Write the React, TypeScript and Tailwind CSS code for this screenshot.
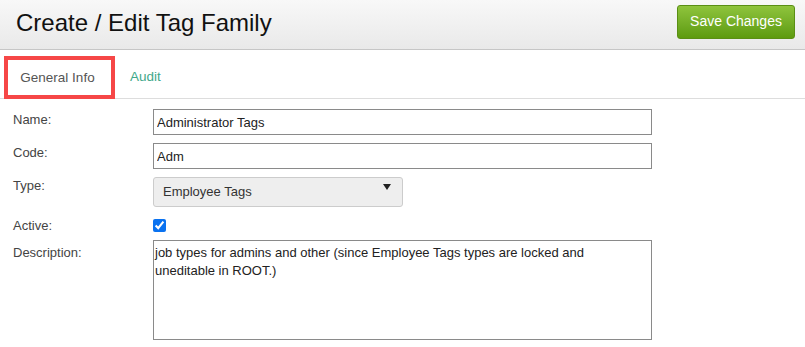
import { useState } from "react";

const font = { fontFamily: '"Liberation Sans", Arial, sans-serif' };

function Row({
  label,
  children,
  labelPad = "pt-0",
  align = "items-start",
}: {
  label: string;
  children: React.ReactNode;
  labelPad?: string;
  align?: string;
}) {
  return (
    <div className={`flex ${align}`}>
      <div className={`w-[140px] shrink-0 text-[13px] leading-[16px] text-[#444] ${labelPad}`}>{label}</div>
      <div className="flex-1 flex">{children}</div>
    </div>
  );
}

export default function App() {
  const [name, setName] = useState("Administrator Tags");
  const [code, setCode] = useState("Adm");
  const [active, setActive] = useState(true);
  const [desc, setDesc] = useState(
    "job types for admins and other (since Employee Tags types are locked and uneditable in ROOT.)"
  );

  return (
    <div className="w-[805px] h-[347px] bg-white overflow-hidden" style={font}>
      <div className="h-[50px] flex items-center justify-between pl-4 pr-[10px] bg-gradient-to-b from-[#f8f8f8] to-[#e9e9e9] border-b border-[#c6c6c6]">
        <h1 className="text-[24px] text-[#111] leading-none -mt-[4px]">Create / Edit Tag Family</h1>
        <button className="h-[34px] w-[118px] -mt-[6px] rounded-[3px] border border-[#5a8f14] bg-gradient-to-b from-[#8fc43c] to-[#5d9b0d] text-white text-[14px]">
          Save Changes
        </button>
      </div>

      <div className="flex items-end pt-[6px] pl-[4px] border-b border-[#dddddd]">
        <div className="w-[111px] h-[43px] -mb-px border-4 border-[#f64747] flex items-center justify-center pt-[2px] pr-[4px] text-[13.5px] text-[#555]">
          General Info
        </div>
        <div className="h-[42px] flex items-center pl-[15px] text-[13.5px] text-[#3fa88a]">Audit</div>
      </div>

      <div className="pl-[13px] pt-[10px] flex flex-col">
        <Row label="Name:" labelPad="pt-[3px]">
          <input
            value={name}
            onChange={(e) => setName(e.target.value)}
            className="w-[499px] h-[26px] border border-[#8a8a8a] px-[3px] text-[13px] text-[#222] outline-none"
          />
        </Row>
        <div className="h-[8px]" />
        <Row label="Code:" labelPad="pt-[2px]">
          <input
            value={code}
            onChange={(e) => setCode(e.target.value)}
            className="w-[499px] h-[26px] border border-[#8a8a8a] px-[3px] text-[13px] text-[#222] outline-none"
          />
        </Row>
        <div className="h-[8px]" />
        <Row label="Type:" labelPad="pt-[1px]">
          <div className="relative w-[250px] h-[30px] rounded-[3px] border border-[#cccccc] bg-[#eeeeee] flex items-center pl-[9px] text-[13px] text-[#333]">
            Employee Tags
            <svg className="absolute right-[11px] top-[6px]" width="8" height="6" viewBox="0 0 8 6">
              <path d="M0 0 H8 L4 6 Z" fill="#222" />
            </svg>
          </div>
        </Row>
        <div className="h-[12px]" />
        <Row label="Active:" align="items-center h-[13px]">
          <input
            type="checkbox"
            checked={active}
            onChange={(e) => setActive(e.target.checked)}
            className="m-0 w-[13px] h-[13px] accent-[#0a72f0]"
          />
        </Row>
        <div className="h-[8px]" />
        <Row label="Description:" labelPad="pt-[5px]">
          <textarea
            value={desc}
            onChange={(e) => setDesc(e.target.value)}
            className="block w-[499px] h-[100px] border border-[#8a8a8a] pl-[1px] pr-[40px] pt-[3px] text-[13px] leading-[18px] text-[#222] resize-none outline-none"
          />
        </Row>
      </div>
    </div>
  );
}
